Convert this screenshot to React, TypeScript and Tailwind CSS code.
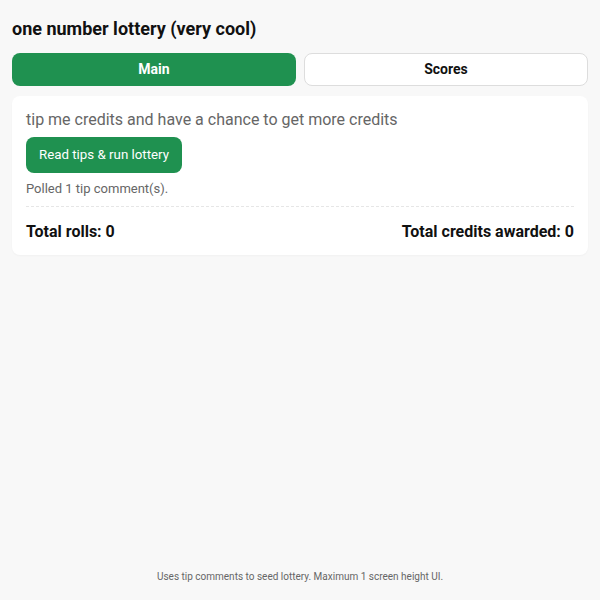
export default function App() {
  return (
    <div className="h-[600px] w-full bg-[#f8f8f8] flex flex-col px-3 pt-[17px] pb-[15px]" style={{ fontFamily: 'Roboto, "Noto Sans", sans-serif' }}>
      <h1 className="text-[18px] leading-[24px] font-bold text-[#111]">one number lottery (very cool)</h1>
      <div className="mt-[12px] grid grid-cols-2 gap-2">
        <button className="h-[33px] rounded-lg bg-[#1f9150] text-white text-[14px] font-bold">Main</button>
        <button className="h-[33px] rounded-lg bg-white border border-[#dddddd] text-[#111] text-[14px] font-bold">Scores</button>
      </div>
      <div className="mt-[10px] bg-white rounded-lg px-[14px] pt-[13px] pb-[11px] shadow-[0_1px_2px_rgba(0,0,0,0.03)]">
        <p className="text-[16px] leading-[22px] text-[#666]">tip me credits and have a chance to get more credits</p>
        <button className="mt-[6px] h-[36px] px-[13px] rounded-lg bg-[#1f9150] text-white text-[13.3px]">Read tips &amp; run lottery</button>
        <p className="mt-[7px] text-[13px] leading-[18px] text-[#666]">Polled 1 tip comment(s).</p>
        <div className="mt-[8px] border-t border-dashed border-[#e6e6e6]"></div>
        <div className="mt-[13px] flex justify-between text-[16px] leading-[24px] font-bold text-[#111]">
          <span>Total rolls: 0</span>
          <span>Total credits awarded: 0</span>
        </div>
      </div>
      <div className="flex-1"></div>
      <p className="text-center text-[10px] leading-[16px] text-[#666]">Uses tip comments to seed lottery. Maximum 1 screen height UI.</p>
    </div>
  );
}
